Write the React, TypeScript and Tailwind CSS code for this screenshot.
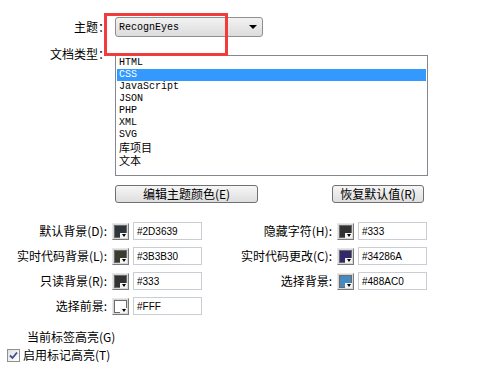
const CJK = "font-['Noto_Sans_CJK_SC','Noto_Sans',sans-serif]";

type ColorField = { label: string; color: string; value: string };

const leftFields: ColorField[] = [
  { label: "默认背景(D):", color: "#2D3639", value: "#2D3639" },
  { label: "实时代码背景(L):", color: "#3B3B30", value: "#3B3B30" },
  { label: "只读背景(R):", color: "#333333", value: "#333" },
  { label: "选择前景:", color: "#FFFFFF", value: "#FFF" },
];

const rightFields: ColorField[] = [
  { label: "隐藏字符(H):", color: "#333333", value: "#333" },
  { label: "实时代码更改(C):", color: "#34286A", value: "#34286A" },
  { label: "选择背景:", color: "#488AC0", value: "#488AC0" },
];

const docTypes = ["HTML", "CSS", "JavaScript", "JSON", "PHP", "XML", "SVG", "库项目", "文本"];

function Swatch({ color }: { color: string }) {
  return (
    <div className="relative w-[17px] h-[17px] border border-t-[#e8e8e8] border-l-[#e8e8e8] border-b-[#7a7a7a] border-r-[#7a7a7a] bg-[#d8d8d8] p-[1px]">
      <div className="w-full h-full border border-[#6b6b6b]" style={{ backgroundColor: color }} />
      <div className="absolute right-[1px] bottom-[1px] w-[7px] h-[5px] bg-[#f4f4f4] flex items-center justify-center">
        <div className="w-0 h-0 border-l-[2.5px] border-r-[2.5px] border-t-[3px] border-l-transparent border-r-transparent border-t-black" />
      </div>
    </div>
  );
}

function ColorInput({ field, labelWidth }: { field: ColorField; labelWidth: string }) {
  return (
    <div className="flex items-center">
      <div className={`${labelWidth} text-right text-[12px] leading-[14px] text-black ${CJK}`}>{field.label}</div>
      <div className="ml-[5px]">
        <Swatch color={field.color} />
      </div>
      <div className="ml-[4px] w-[69px] h-[18px] border border-[#c9ced6] bg-white flex items-center pl-[3px] font-['Liberation_Sans',sans-serif] text-[10px] text-black">
        {field.value}
      </div>
    </div>
  );
}

export default function App() {
  return (
    <div className="relative w-[482px] h-[365px] bg-white overflow-hidden text-black">
      <div className="flex flex-col pt-[17px]">
        {/* theme */}
        <div className="flex items-center h-[20px]">
          <div className={`w-[110px] text-right text-[12px] leading-[14px] ${CJK}`}>主题：</div>
          <div className="ml-[5px] w-[148px] h-[20px] rounded-[3px] border border-[#8e8f8f] bg-gradient-to-b from-[#f2f2f2] to-[#dcdcdc] flex items-center justify-between pl-[3px] pr-[5px]">
            <span className="font-['Liberation_Mono',monospace] text-[10px]">RecognEyes</span>
            <div className="w-0 h-0 border-l-[4px] border-r-[4px] border-t-[4px] border-l-transparent border-r-transparent border-t-black" />
          </div>
        </div>

        {/* doc types */}
        <div className="flex items-start mt-[18px]">
          <div className={`w-[110px] -mt-[8px] text-right text-[12px] leading-[14px] ${CJK}`}>文档类型：</div>
          <div className="ml-[5px] w-[313px] h-[121px] border border-[#828790] overflow-hidden pt-[1px] px-[1px]">
            {docTypes.map((t) =>
              /[a-zA-Z]/.test(t) ? (
                <div
                  key={t}
                  className={`h-[12px] leading-[12px] pl-[2px] font-['Liberation_Mono',monospace] text-[10px] ${
                    t === "CSS" ? "bg-[#3399ff] text-white" : "text-black"
                  }`}
                >
                  {t}
                </div>
              ) : (
                <div key={t} className={`h-[13px] leading-[13px] pl-[2px] text-[11px] text-black ${CJK}`}>
                  {t}
                </div>
              )
            )}
          </div>
        </div>

        {/* buttons */}
        <div className="flex items-center mt-[9px] pl-[115px]">
          <button className={`w-[143px] h-[18px] rounded-[3px] border border-[#707070] bg-gradient-to-b from-[#f6f6f6] to-[#dedede] text-[12px] leading-[14px] ${CJK}`}>
            编辑主题颜色(E)
          </button>
          <button className={`ml-[74px] w-[92px] h-[18px] rounded-[3px] border border-[#707070] bg-gradient-to-b from-[#f6f6f6] to-[#dedede] text-[12px] leading-[14px] ${CJK}`}>
            恢复默认值(R)
          </button>
        </div>

        {/* colors */}
        <div className="flex flex-col mt-[19px] gap-[7px]">
          {leftFields.map((f, i) => (
            <div key={f.label} className="flex items-center h-[18px]">
              <ColorInput field={f} labelWidth="w-[107px]" />
              {rightFields[i] && <ColorInput field={rightFields[i]} labelWidth="w-[130px]" />}
            </div>
          ))}
        </div>

        {/* highlight */}
        <div className={`mt-[15px] pl-[27px] text-[12px] leading-[14px] ${CJK}`}>当前标签高亮(G)</div>
        <div className="flex items-center mt-[4px] pl-[7px]">
          <div className="w-[13px] h-[13px] border border-[#8f8f8f] bg-gradient-to-br from-[#e0e0e0] to-[#ffffff] flex items-center justify-center">
            <svg width="9" height="9" viewBox="0 0 9 9">
              <path d="M1 4.5 L3.5 7 L8 1.5" fill="none" stroke="#3c4f8c" strokeWidth="1.8" />
            </svg>
          </div>
          <span className={`ml-[3px] text-[12px] leading-[14px] ${CJK}`}>启用标记高亮(T)</span>
        </div>
      </div>

      {/* annotation box */}
      <div className="absolute left-[104px] top-[13px] w-[124px] h-[43px] border-[3px] border-[#f23c3c]" />
    </div>
  );
}
